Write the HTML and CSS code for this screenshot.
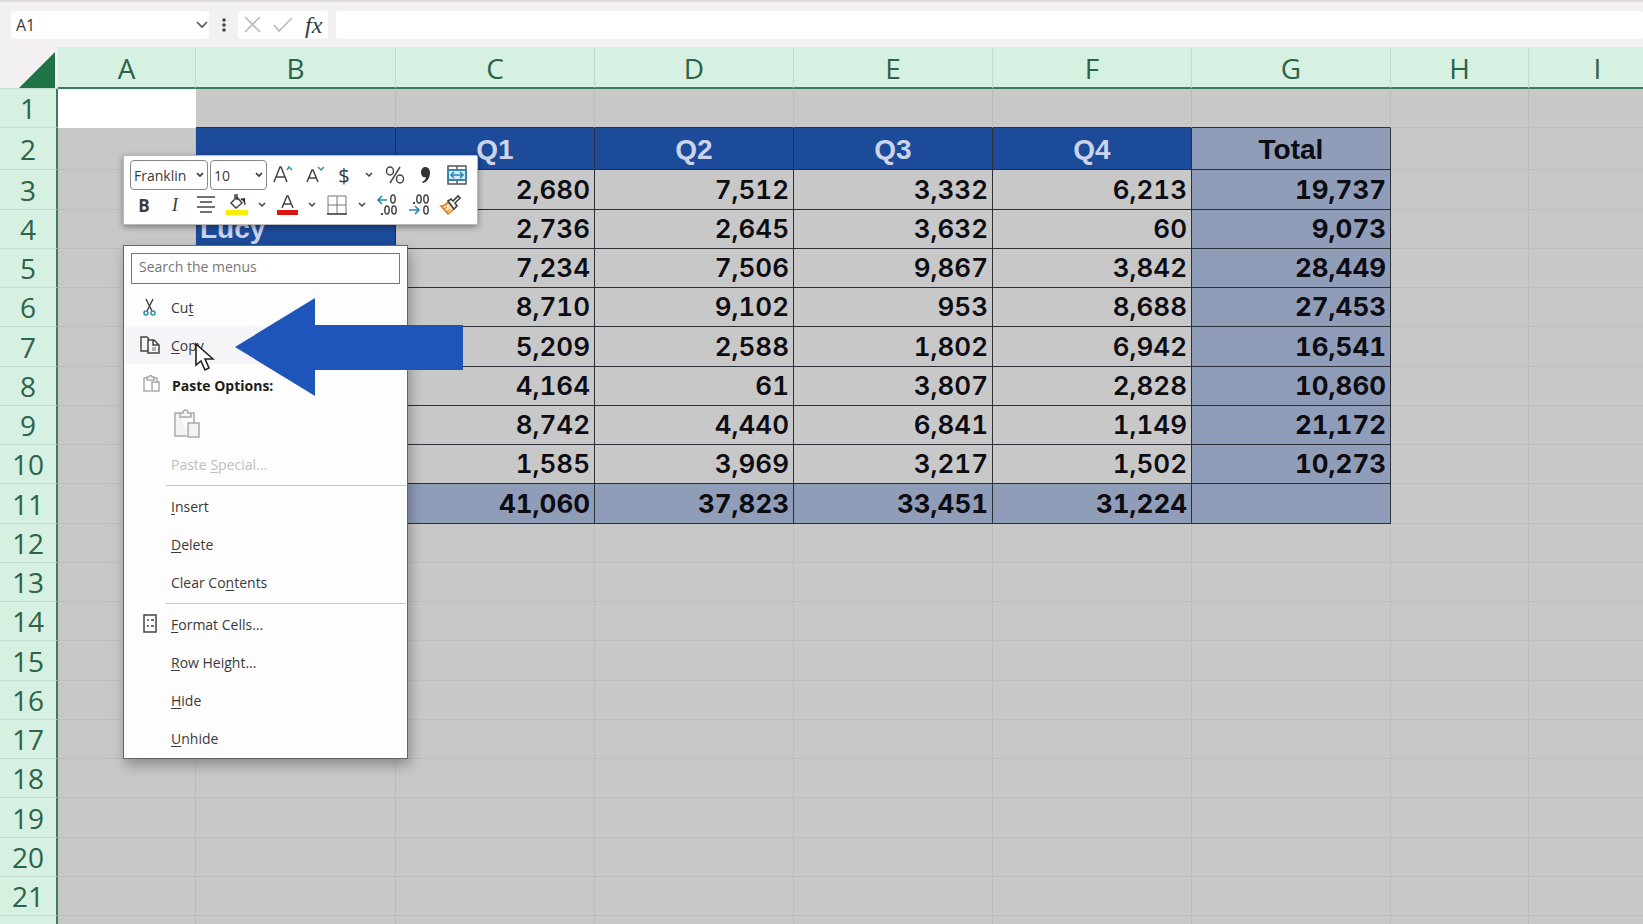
FILE: index.html
```html
<!DOCTYPE html>
<html lang="en">

<head>
    <meta charset="UTF-8">
    <title>Spreadsheet</title>
    <link rel="stylesheet" href="styles.css">
</head>

<body>
    <header id="formula">
        <div class="namebox">
            <input type="text" value="A1" aria-label="Name box">
            <button type="button" aria-label="Names">
                <svg width="14" height="10" viewBox="0 0 14 10"><path d="M2 2l5 5 5-5" /></svg>
            </button>
        </div>
        <svg class="dots" width="6" height="16" viewBox="0 0 6 16"><circle cx="3" cy="3" r="1.8" /><circle cx="3" cy="8" r="1.8" /><circle cx="3" cy="13" r="1.8" /></svg>
        <div class="entry">
            <button type="button" aria-label="Cancel"><svg width="20" height="18" viewBox="0 0 20 18"><path d="M2 1l15 15M17 1L2 16" /></svg></button>
            <button type="button" aria-label="Enter"><svg width="20" height="18" viewBox="0 0 20 18"><path d="M1 9l5 6L19 2" /></svg></button>
            <button type="button" class="fx" aria-label="Insert function">fx</button>
        </div>
        <input class="bar" type="text" aria-label="Formula bar">
    </header>

    <main id="sheet">
        <table id="grid">
            <colgroup>
                <col class="num"><col class="narrow"><col class="first"><col><col><col><col><col><col class="narrow"><col class="narrow">
            </colgroup>
            <thead>
                <tr>
                    <th class="corner"><svg width="36" height="36" viewBox="0 0 36 36"><path d="M36 0v36H0z" /></svg></th>
                    <th>A</th><th>B</th><th>C</th><th>D</th><th>E</th><th>F</th><th>G</th><th>H</th><th>I</th>
                </tr>
            </thead>
            <tbody>
                <tr class="top"><th>1</th><td class="active"></td><td></td><td></td><td></td><td></td><td></td><td></td><td></td><td></td></tr>
                <tr class="quarters"><th>2</th><td></td><td class="name"></td><td class="name">Q1</td><td class="name">Q2</td><td class="name">Q3</td><td class="name">Q4</td><td class="sum">Total</td><td></td><td></td></tr>
                <tr><th>3</th><td></td><td class="name"></td><td class="val">2,680</td><td class="val">7,512</td><td class="val">3,332</td><td class="val">6,213</td><td class="sum">19,737</td><td></td><td></td></tr>
                <tr><th>4</th><td></td><td class="name">Lucy</td><td class="val">2,736</td><td class="val">2,645</td><td class="val">3,632</td><td class="val">60</td><td class="sum">9,073</td><td></td><td></td></tr>
                <tr><th>5</th><td></td><td class="name"></td><td class="val">7,234</td><td class="val">7,506</td><td class="val">9,867</td><td class="val">3,842</td><td class="sum">28,449</td><td></td><td></td></tr>
                <tr><th>6</th><td></td><td class="name"></td><td class="val">8,710</td><td class="val">9,102</td><td class="val">953</td><td class="val">8,688</td><td class="sum">27,453</td><td></td><td></td></tr>
                <tr><th>7</th><td></td><td class="name"></td><td class="val">5,209</td><td class="val">2,588</td><td class="val">1,802</td><td class="val">6,942</td><td class="sum">16,541</td><td></td><td></td></tr>
                <tr><th>8</th><td></td><td class="name"></td><td class="val">4,164</td><td class="val">61</td><td class="val">3,807</td><td class="val">2,828</td><td class="sum">10,860</td><td></td><td></td></tr>
                <tr><th>9</th><td></td><td class="name"></td><td class="val">8,742</td><td class="val">4,440</td><td class="val">6,841</td><td class="val">1,149</td><td class="sum">21,172</td><td></td><td></td></tr>
                <tr><th>10</th><td></td><td class="name"></td><td class="val">1,585</td><td class="val">3,969</td><td class="val">3,217</td><td class="val">1,502</td><td class="sum">10,273</td><td></td><td></td></tr>
                <tr><th>11</th><td></td><td class="sum"></td><td class="sum">41,060</td><td class="sum">37,823</td><td class="sum">33,451</td><td class="sum">31,224</td><td class="sum"></td><td></td><td></td></tr>
                <tr><th>12</th><td></td><td></td><td></td><td></td><td></td><td></td><td></td><td></td><td></td></tr>
                <tr><th>13</th><td></td><td></td><td></td><td></td><td></td><td></td><td></td><td></td><td></td></tr>
                <tr><th>14</th><td></td><td></td><td></td><td></td><td></td><td></td><td></td><td></td><td></td></tr>
                <tr><th>15</th><td></td><td></td><td></td><td></td><td></td><td></td><td></td><td></td><td></td></tr>
                <tr><th>16</th><td></td><td></td><td></td><td></td><td></td><td></td><td></td><td></td><td></td></tr>
                <tr><th>17</th><td></td><td></td><td></td><td></td><td></td><td></td><td></td><td></td><td></td></tr>
                <tr><th>18</th><td></td><td></td><td></td><td></td><td></td><td></td><td></td><td></td><td></td></tr>
                <tr><th>19</th><td></td><td></td><td></td><td></td><td></td><td></td><td></td><td></td><td></td></tr>
                <tr><th>20</th><td></td><td></td><td></td><td></td><td></td><td></td><td></td><td></td><td></td></tr>
                <tr><th>21</th><td></td><td></td><td></td><td></td><td></td><td></td><td></td><td></td><td></td></tr>
                <tr><th></th><td></td><td></td><td></td><td></td><td></td><td></td><td></td><td></td><td></td></tr>
            </tbody>
        </table>

        <!-- mini toolbar -->
        <div id="mini">
            <div class="line">
                <span class="pick font">
                    <select aria-label="Font"><option>Franklin</option></select>
                    <svg width="8" height="6" viewBox="0 0 8 6"><path d="M1 1l3 3 3-3" /></svg>
                </span>
                <span class="pick size">
                    <select aria-label="Font size"><option>10</option></select>
                    <svg width="8" height="6" viewBox="0 0 8 6"><path d="M1 1l3 3 3-3" /></svg>
                </span>
                <button type="button" class="w32" aria-label="Increase font size">
                    <svg width="22" height="22" viewBox="0 0 22 22"><path class="ink" d="M2 18L8 3h1l6 15M4 13h9" /><path class="teal" d="M15 6l2-3 3 3" /></svg>
                </button>
                <button type="button" class="w32" aria-label="Decrease font size">
                    <svg width="22" height="22" viewBox="0 0 22 22"><path class="ink" d="M3 18L8 6h1l5 12M5 14h7" /><path class="teal" d="M14 3l3 3 3-3" /></svg>
                </button>
                <button type="button" class="w26 sign" aria-label="Accounting format">$</button>
                <button type="button" class="w24" aria-label="More currencies"><svg width="8" height="6" viewBox="0 0 8 6"><path class="ink" d="M1 1l3 3 3-3" /></svg></button>
                <button type="button" class="w28" aria-label="Percent">
                    <svg width="20" height="20" viewBox="0 0 20 20"><ellipse class="ink" cx="5" cy="6" rx="3.5" ry="4" /><ellipse class="ink" cx="15" cy="14" rx="3.5" ry="4" /><path class="ink" d="M15 2L5 18" /></svg>
                </button>
                <button type="button" class="w34" aria-label="Comma style">
                    <svg width="12" height="18" viewBox="0 0 12 18"><path fill="#333" d="M5 1c3 0 5 2 5 6 0 5-3 9-7 10l-1-1c2-1 4-3 4-5-3 1-5-1-5-5 0-3 2-5 4-5z" /></svg>
                </button>
                <button type="button" class="w28" aria-label="Merge and center">
                    <svg width="22" height="22" viewBox="0 0 22 22"><path fill="#d3ecf8" d="M2 6h18v10H2z" /><path class="dark" d="M2 2h18v18H2zM2 6h18M2 16h18M11 2v4M11 16v4" /><path class="blue" d="M2 6h18v10H2zM5 11h12M8 8l-3 3 3 3M14 8l3 3-3 3" /></svg>
                </button>
            </div>
            <div class="line second">
                <button type="button" class="w30 bold" aria-label="Bold">B</button>
                <button type="button" class="w32 italic" aria-label="Italic">I</button>
                <button type="button" class="w30" aria-label="Center">
                    <svg width="20" height="20" viewBox="0 0 20 20"><path class="ink" d="M1 2h18M4 7h12M1 12h18M4 17h12" /></svg>
                </button>
                <button type="button" class="w32" aria-label="Fill color">
                    <svg width="22" height="22" viewBox="0 0 22 22"><path class="ink" d="M5 9l6-6 5 6-6 5zM9 5V1h2v5" /><path class="blue" d="M15 5c3 0 4 3 4 6" /><path fill="#333" d="M14 5l5-1v7c-1-3-2-5-5-6z" /><path fill="#f5f000" d="M0 16h22v5H0z" /></svg>
                </button>
                <button type="button" class="w18" aria-label="Fill colors"><svg width="8" height="6" viewBox="0 0 8 6"><path class="ink" d="M1 1l3 3 3-3" /></svg></button>
                <button type="button" class="w32" aria-label="Font color">
                    <svg width="22" height="22" viewBox="0 0 22 22"><path class="ink" d="M6 14l5-12h1l5 12M8 10h7" /><path fill="#dc1414" d="M1 16h21v5H1z" /></svg>
                </button>
                <button type="button" class="w18" aria-label="Font colors"><svg width="8" height="6" viewBox="0 0 8 6"><path class="ink" d="M1 1l3 3 3-3" /></svg></button>
                <button type="button" class="w32" aria-label="Borders">
                    <svg width="20" height="20" viewBox="0 0 20 20"><path class="grey" d="M1 1h18v18H1zM10 1v18M1 10h18" /><path class="ink" d="M0 19h20" /></svg>
                </button>
                <button type="button" class="w18" aria-label="More borders"><svg width="8" height="6" viewBox="0 0 8 6"><path class="ink" d="M1 1l3 3 3-3" /></svg></button>
                <button type="button" class="w32" aria-label="Increase decimal">
                    <svg width="22" height="22" viewBox="0 0 22 22"><path class="blue" d="M2 6h9M6 2L2 6l4 4" /><ellipse class="ink" cx="17" cy="5" rx="2.2" ry="4" /><ellipse class="ink" cx="11" cy="16" rx="2.2" ry="4" /><ellipse class="ink" cx="18" cy="16" rx="2.2" ry="4" /><path fill="#444" d="M5 19h2v2H5z" /></svg>
                </button>
                <button type="button" class="w32" aria-label="Decrease decimal">
                    <svg width="22" height="22" viewBox="0 0 22 22"><path class="blue" d="M1 16h10M7 12l4 4-4 4" /><ellipse class="ink" cx="11" cy="5" rx="2.2" ry="4" /><ellipse class="ink" cx="18" cy="5" rx="2.2" ry="4" /><ellipse class="ink" cx="18" cy="16" rx="2.2" ry="4" /><path fill="#444" d="M5 8h2v2H5z" /></svg>
                </button>
                <button type="button" class="w30" aria-label="Format painter">
                    <svg width="22" height="22" viewBox="0 0 22 22"><path fill="#f9dfb5" stroke="#e07b1c" stroke-width="1.6" d="M9 8l6 7-6 5-7-8c3 0 5-1 7-4z" /><path stroke="#e07b1c" d="M5 15l3-2M8 18l3-3" /><path fill="#fff" stroke="#444" stroke-width="1.6" d="M9 7l3-2 2 2 5-5 2 2-5 5 2 3-3 3z" /></svg>
                </button>
            </div>
        </div>

        <!-- right click menu -->
        <div id="menu">
            <input type="text" placeholder="Search the menus" aria-label="Search the menus">
            <button type="button">
                <svg width="20" height="20" viewBox="0 0 20 20"><path class="ink" d="M6 2l6 12M13 2L7 14" /><circle class="teal" cx="6" cy="16" r="2" /><circle class="teal" cx="13" cy="16" r="2" /></svg>
                <span>Cu<u>t</u></span>
            </button>
            <button type="button" class="hover">
                <svg width="20" height="20" viewBox="0 0 20 20"><path class="ink" d="M8 16H1V2h6l2 2M8 5h6l5 5v8H8zM13 5v5h5" /><path class="grey" d="M12 13h4M12 15h4" /></svg>
                <span><u>C</u>opy</span>
            </button>
            <button type="button" class="paste">
                <svg class="pale" width="20" height="20" viewBox="0 0 20 20"><path d="M10 16H3V3h3M13 3h3v4M6 2h2l1-2h1l1 2h2v3H6zM11 7h7v9h-7z" /></svg>
                <span>Paste Options:</span>
            </button>
            <button type="button" class="clip" aria-label="Paste">
                <svg class="pale" width="28" height="30" viewBox="0 0 28 30"><path fill="#f3f3f3" d="M14 27H2V4h5M17 4h4v10M7 4h3c0-4 5-4 5 0h3v4H7zM15 14h11v14H15z" /></svg>
            </button>
            <button type="button" disabled><i></i><span>Paste <u>S</u>pecial...</span></button>
            <hr>
            <button type="button"><i></i><span><u>I</u>nsert</span></button>
            <button type="button"><i></i><span><u>D</u>elete</span></button>
            <button type="button"><i></i><span>Clear Co<u>n</u>tents</span></button>
            <hr>
            <button type="button">
                <svg width="20" height="20" viewBox="0 0 20 20"><path class="ink" d="M4 1h12v17H4z" /><path class="ink" d="M7 6h2M11 6h3M7 12h2M11 12h3" /></svg>
                <span><u>F</u>ormat Cells...</span>
            </button>
            <button type="button"><i></i><span><u>R</u>ow Height...</span></button>
            <button type="button"><i></i><span><u>H</u>ide</span></button>
            <button type="button"><i></i><span><u>U</u>nhide</span></button>
        </div>

        <svg id="arrow" width="228" height="100" viewBox="0 0 228 100"><path d="M0 49L80 0v27h148v45H80v26z" /></svg>
        <svg id="pointer" width="20" height="30" viewBox="0 0 20 30"><path d="M1 2v21l5-4 4 9 4-2-4-9h8z" /></svg>
    </main>
</body>

</html>
```
FILE: styles.css
```css
* {
    box-sizing: border-box;
}

body {
    display: flex;
    flex-direction: column;
    height: 100vh;
    margin: 0;
    overflow: hidden;
    background: #c8c8c8;
    color: #3a3a3a;
    font-family: "Open Sans", sans-serif;
    font-size: 14px;
}

button,
input,
select {
    margin: 0;
    padding: 0;
    border: 0;
    background: none;
    color: inherit;
    font: inherit;
}

svg {
    display: block;
    flex: none;
    fill: none;
}

/* formula bar */
#formula {
    display: flex;
    flex: none;
    align-items: center;
    height: 47px;
    padding-left: 11px;
    border-top: 2px solid #dcdada;
    background: #f2f0f0;
}

.namebox,
.entry,
.bar {
    height: 28px;
    border-radius: 3px;
    background: #fff;
}

.namebox {
    display: flex;
    align-items: center;
    width: 198px;
    padding-left: 5px;
}

.namebox input {
    flex: 1;
    min-width: 0;
    font-size: 16px;
}

.namebox path {
    stroke: #555;
    stroke-width: 1.6;
}

.dots {
    margin: 0 12px;
    fill: #444;
}

.entry {
    display: flex;
    align-items: center;
    width: 90px;
    margin-left: -1px;
    padding-left: 5px;
    gap: 10px;
}

.entry path {
    stroke: #bbb;
    stroke-width: 1.6;
}

.entry .fx {
    padding-left: 2px;
    font: italic 24px/24px "Liberation Serif", serif;
}

.bar {
    flex: 1;
    min-width: 0;
    margin-left: 8px;
}

/* grid */
#sheet {
    position: relative;
    flex: 1;
    min-height: 0;
    overflow: hidden;
}

#grid {
    width: 1667px;
    table-layout: fixed;
    border-collapse: separate;
    border-spacing: 0;
}

col {
    width: 199px;
}

col.num {
    width: 58px;
}

col.first {
    width: 200px;
}

col.narrow {
    width: 138px;
}

#grid th {
    height: 39px;
    padding: 0;
    border-right: 2px solid #3c7d5c;
    border-bottom: 1px solid #bfdccd;
    background: #d6f0e2;
    color: #2c6349;
    font-weight: 400;
    font-size: 28px;
    line-height: 32px;
}

#grid thead th {
    height: 42px;
    padding-top: 2px;
    border-right: 1px solid #bfdccd;
    border-bottom: 2px solid #3c7d5c;
}

#grid thead .corner {
    padding-right: 3px;
    border-right: 0;
    border-bottom: 1px solid #bfdccd;
    background: #f2f0f0;
    vertical-align: bottom;
}

.corner svg {
    margin-left: auto;
    fill: #1f7446;
}

#grid td {
    padding: 0 4px;
    border-right: 1px solid #bdbdbd;
    border-bottom: 1px solid #bdbdbd;
    color: #0c0c12;
    font: 700 28px/32px "Liberation Sans", Arial, sans-serif;
    text-align: right;
}

#grid tbody tr:nth-child(4n+3) th {
    height: 40px;
}

#grid .quarters th {
    height: 42px;
}

#grid td.active {
    border-color: #fff;
    background: #fff;
}

#grid td.name {
    background: #1c4b99;
    color: #ccd4ec;
    text-align: left;
}

#grid td.val,
#grid td.sum {
    font: 600 26px/32px Inter, sans-serif;
    font-variant-numeric: tabular-nums;
}

#grid td.sum {
    background: #909db8;
    font-weight: 700;
}

#grid td.name,
#grid td.val,
#grid td.sum,
#grid .top td:nth-child(n+3):nth-child(-n+8) {
    border-bottom-color: #2d3038;
}

#grid td.name,
#grid td.val,
#grid td.sum {
    border-right-color: #2d3038;
}

#grid .quarters td {
    padding-top: 3px;
    font: 700 28px/32px "Liberation Sans", Arial, sans-serif;
    text-align: center;
}

/* mini toolbar */
#mini {
    position: absolute;
    top: 108px;
    left: 123px;
    width: 355px;
    height: 70px;
    padding: 4px 4px 4px 6px;
    border: 1px solid #bbb;
    border-radius: 2px;
    background: #fff;
    box-shadow: 0 2px 6px rgba(0, 0, 0, .4);
}

.line {
    display: flex;
    align-items: center;
    height: 30px;
}

.second {
    margin-left: -1px;
}

.line button {
    display: flex;
    flex: none;
    align-items: center;
    justify-content: center;
    height: 28px;
}

.pick {
    display: flex;
    flex: none;
    align-items: center;
    height: 30px;
    margin-right: 2px;
    padding: 0 3px;
    border: 1px solid #888;
    border-radius: 4px;
}

.pick select {
    flex: 1;
    min-width: 0;
    appearance: none;
}

.pick path {
    stroke: #333;
    stroke-width: 1.6;
}

.font {
    width: 78px;
}

.size {
    width: 57px;
    margin-right: 0;
}

.w18 { width: 18px; }
.w24 { width: 24px; }
.w26 { width: 26px; }
.w28 { width: 28px; }
.w30 { width: 30px; }
.w32 { width: 32px; }
.w34 { width: 34px; }

.sign {
    font-size: 20px;
}

.bold {
    font-weight: 700;
    font-size: 17px;
}

.italic {
    font: italic 18px "Liberation Serif", serif;
}

.ink {
    stroke: #444;
    stroke-width: 1.5;
}

.dark {
    stroke: #555;
    stroke-width: 1.5;
}

.grey {
    stroke: #777;
}

.teal {
    stroke: #2b94a6;
    stroke-width: 1.5;
}

.blue {
    stroke: #2788b5;
    stroke-width: 1.6;
}

/* context menu */
#menu {
    position: absolute;
    top: 198px;
    left: 123px;
    width: 285px;
    padding: 7px 1px 1px;
    border: 1px solid #666;
    background: #fdfdfd;
    box-shadow: 2px 6px 12px rgba(0, 0, 0, .3);
}

#menu input {
    display: block;
    width: 269px;
    height: 31px;
    margin: 0 6px 4px;
    padding: 0 7px 5px;
    border: 1px solid #777;
    background: #fff;
}

#menu input::placeholder {
    color: #777;
}

#menu button {
    display: flex;
    align-items: center;
    width: 100%;
    height: 38px;
    padding-left: 15px;
    gap: 11px;
    text-align: left;
}

#menu i {
    width: 20px;
}

#menu u {
    text-underline-offset: 2px;
}

#menu .hover {
    background: #f5f4f6;
}

#menu .paste {
    margin-top: 2px;
    padding-left: 16px;
    color: #1c1c1c;
    font-weight: 700;
}

#menu .clip {
    height: 41px;
    padding-bottom: 2px;
    padding-left: 48px;
}

#menu button:disabled {
    color: #c0c0c0;
}

#menu hr {
    height: 1px;
    margin: 2px 0 1px 41px;
    border: 0;
    background: #c6c6c6;
}

.pale {
    stroke: #aaa;
    stroke-width: 1.5;
}

#arrow {
    position: absolute;
    top: 251px;
    left: 235px;
    fill: #1f54bb;
}

#pointer {
    position: absolute;
    top: 295px;
    left: 195px;
    fill: #fff;
    stroke: #222;
    stroke-width: 1.6;
}
```
